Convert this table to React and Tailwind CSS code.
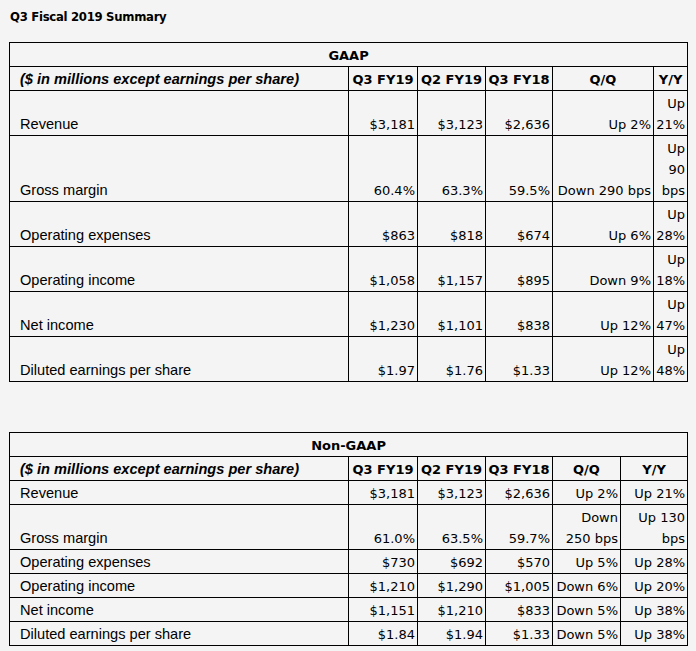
import React from "react";

const gaap = [
  ["Revenue", "$3,181", "$3,123", "$2,636", "Up 2%", "Up 21%"],
  ["Gross margin", "60.4%", "63.3%", "59.5%", "Down 290 bps", "Up 90 bps"],
  ["Operating expenses", "$863", "$818", "$674", "Up 6%", "Up 28%"],
  ["Operating income", "$1,058", "$1,157", "$895", "Down 9%", "Up 18%"],
  ["Net income", "$1,230", "$1,101", "$838", "Up 12%", "Up 47%"],
  ["Diluted earnings per share", "$1.97", "$1.76", "$1.33", "Up 12%", "Up 48%"],
];

const nongaap = [
  ["Revenue", "$3,181", "$3,123", "$2,636", "Up 2%", "Up 21%"],
  ["Gross margin", "61.0%", "63.5%", "59.7%", "Down 250 bps", "Up 130 bps"],
  ["Operating expenses", "$730", "$692", "$570", "Up 5%", "Up 28%"],
  ["Operating income", "$1,210", "$1,290", "$1,005", "Down 6%", "Up 20%"],
  ["Net income", "$1,151", "$1,210", "$833", "Down 5%", "Up 38%"],
  ["Diluted earnings per share", "$1.84", "$1.94", "$1.33", "Down 5%", "Up 38%"],
];

const num = "font-['DejaVu_Sans',sans-serif] text-[13px]";
const lab = "font-['Liberation_Sans',Arial,sans-serif] text-[14.6px]";
const cell = "border border-black align-bottom leading-[21px] pt-[2px] pb-0";

function Table({ title, rows, widths }) {
  return (
    <table className="table-fixed border-collapse w-[679px] text-black">
      <colgroup>
        {widths.map((w, i) => (
          <col key={i} style={{ width: w }} />
        ))}
      </colgroup>
      <tbody>
        <tr>
          <td colSpan={6} className={`${cell} ${num} font-bold text-center`}>
            {title}
          </td>
        </tr>
        <tr>
          <td className={`${cell} ${lab} font-bold italic pl-[10px]`}>
            ($ in millions except earnings per share)
          </td>
          {["Q3 FY19", "Q2 FY19", "Q3 FY18", "Q/Q", "Y/Y"].map((h) => (
            <td key={h} className={`${cell} ${num} font-bold text-center px-[2px] whitespace-nowrap`}>
              {h}
            </td>
          ))}
        </tr>
        {rows.map((r) => (
          <tr key={r[0]}>
            <td className={`${cell} ${lab} pl-[10px]`}>{r[0]}</td>
            {r.slice(1).map((v, i) => (
              <td key={i} className={`${cell} ${num} text-right pr-[2px] pl-[2px]`}>
                {v}
              </td>
            ))}
          </tr>
        ))}
      </tbody>
    </table>
  );
}

export default function App() {
  return (
    <div className="w-[696px] h-[651px] bg-[#f4f4f4] overflow-hidden">
      <div className="pt-[8px] pl-[10px] h-[42px] font-['DejaVu_Sans_Condensed','DejaVu_Sans',sans-serif] font-bold text-[13px] leading-[18px] tracking-[-0.3px] text-black">
        Q3 Fiscal 2019 Summary
      </div>
      <div className="pl-[9px]">
        <Table title="GAAP" rows={gaap} widths={[339, 69, 68, 67, 101, 34]} />
      </div>
      <div className="h-[50px]" />
      <div className="pl-[9px]">
        <Table title="Non-GAAP" rows={nongaap} widths={[339, 69, 68, 67, 68, 67]} />
      </div>
    </div>
  );
}
